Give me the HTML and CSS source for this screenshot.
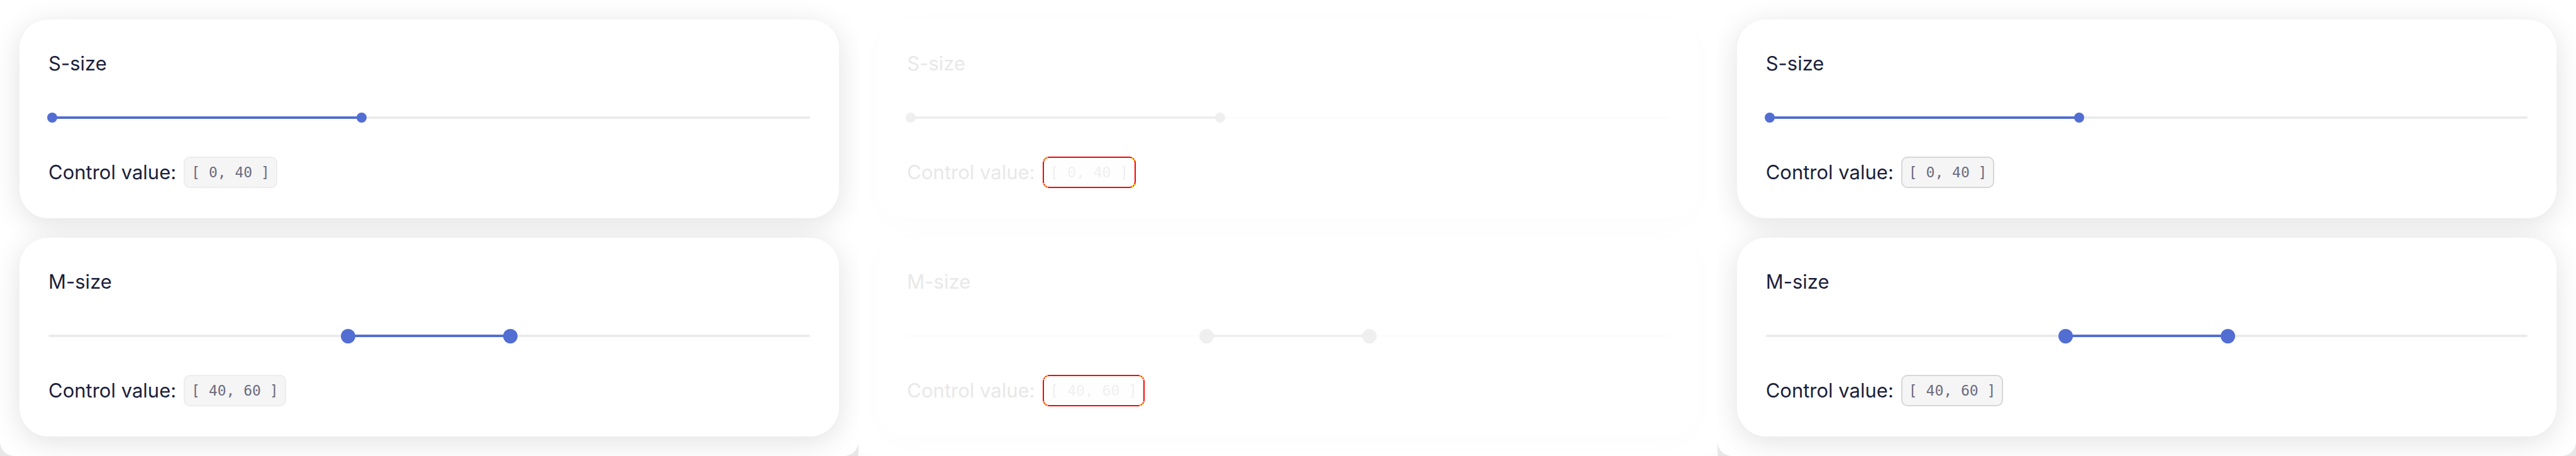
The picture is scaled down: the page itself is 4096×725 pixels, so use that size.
FILE: index.html
```
<!DOCTYPE html>
<html lang="en">
<head>
<meta charset="utf-8">
<title>Range</title>
<link rel="stylesheet" href="styles.css">
</head>
<body>
<main class="board">
  <section class="panel">
    <article class="card">
      <h2 class="title">S-size</h2>
      <div class="slider slider-s">
        <div class="track"><div class="fill" style="width:41.1%"></div></div>
        <input class="range" type="range" aria-label="S-size from" value="0">
        <input class="range" type="range" aria-label="S-size to" value="40">
      </div>
      <p class="value">Control value: <code class="code">[ 0, 40 ]</code></p>
    </article>
    <article class="card">
      <h2 class="title">M-size</h2>
      <div class="slider slider-m">
        <div class="track"><div class="fill" style="margin-left:39.3%;width:21.4%"></div></div>
        <input class="range" type="range" aria-label="M-size from" value="40">
        <input class="range" type="range" aria-label="M-size to" value="60">
      </div>
      <p class="value">Control value: <code class="code">[ 40, 60 ]</code></p>
    </article>
  </section>
  <section class="panel panel-diff">
    <article class="card">
      <h2 class="title">S-size</h2>
      <div class="slider slider-s">
        <div class="track"><div class="fill" style="width:41.1%"></div></div>
        <input class="range" type="range" aria-label="S-size from" value="0">
        <input class="range" type="range" aria-label="S-size to" value="40">
      </div>
      <p class="value">Control value: <code class="code">[ 0, 40 ]</code></p>
    </article>
    <article class="card">
      <h2 class="title">M-size</h2>
      <div class="slider slider-m">
        <div class="track"><div class="fill" style="margin-left:39.3%;width:21.4%"></div></div>
        <input class="range" type="range" aria-label="M-size from" value="40">
        <input class="range" type="range" aria-label="M-size to" value="60">
      </div>
      <p class="value">Control value: <code class="code">[ 40, 60 ]</code></p>
    </article>
  </section>
  <section class="panel panel-new">
    <article class="card">
      <h2 class="title">S-size</h2>
      <div class="slider slider-s">
        <div class="track"><div class="fill" style="width:41.1%"></div></div>
        <input class="range" type="range" aria-label="S-size from" value="0">
        <input class="range" type="range" aria-label="S-size to" value="40">
      </div>
      <p class="value">Control value: <code class="code">[ 0, 40 ]</code></p>
    </article>
    <article class="card">
      <h2 class="title">M-size</h2>
      <div class="slider slider-m">
        <div class="track"><div class="fill" style="margin-left:39.3%;width:21.4%"></div></div>
        <input class="range" type="range" aria-label="M-size from" value="40">
        <input class="range" type="range" aria-label="M-size to" value="60">
      </div>
      <p class="value">Control value: <code class="code">[ 40, 60 ]</code></p>
    </article>
  </section>
</main>
</body>
</html>
```
FILE: styles.css
```
* { box-sizing: border-box; }
body { margin: 0; background: #fff; font-family: Inter, "Liberation Sans", sans-serif; }
.board {
  display: grid;
  grid-template-columns: repeat(3, 1fr);
  background: linear-gradient(90deg, #e8e8e8 33.33%, #fdfdfd 33.33% 66.67%, #e8e8e8 66.67%);
}
.panel {
  --ink: #1b1f3b;
  --accent: #526ed3;
  --rail: #ebebeb;
  --code-ink: #6c6c80;
  --code-bg: #f5f5f5;
  --code-line: #ededed;
  --shade: rgba(0, 0, 0, 0.12);
  display: flex;
  flex-direction: column;
  gap: 31px;
  padding: 31px;
  overflow: hidden;
  background: #fff;
  border-radius: 0 0 23px 23px;
}
.panel-diff {
  --ink: #e8e8e8;
  --accent: #efefef;
  --rail: #fcfcfc;
  --code-ink: #f0f0f0;
  --code-bg: #fefefe;
  --code-line: #f00;
  --shade: rgba(0, 0, 0, 0.015);
}
.panel-new { --code-line: #d7d7d7; }
.card {
  padding: 46px 46px 48px;
  border-radius: 46px;
  background: #fff;
  box-shadow: 0 8px 46px var(--shade);
  color: var(--ink);
}
.title { margin: 0; font-size: 31px; font-weight: 400; line-height: 48px; }
.slider { position: relative; height: 32px; margin: 46px 0; padding: 14px 0; }
.slider-s { --thumb: 16px; --start: -2px; --end: -33px; }
.slider-m { --thumb: 23px; --start: -52px; --end: -52px; }
.track { height: 4px; border-radius: 2px; background: var(--rail); }
.fill { height: 4px; background: var(--accent); }
.range {
  position: absolute;
  top: 0;
  left: var(--start);
  width: calc(100% - var(--start) - var(--end));
  height: 32px;
  margin: 0;
  appearance: none;
  background: none;
  pointer-events: none;
}
.range::-webkit-slider-thumb {
  appearance: none;
  width: var(--thumb);
  height: var(--thumb);
  border-radius: 50%;
  background: var(--accent);
  pointer-events: auto;
}
.value { display: flex; align-items: center; gap: 12px; margin: 0; font-size: 31px; line-height: 46px; }
.code {
  position: relative;
  padding: 0 10px;
  border: 2px solid var(--code-line);
  border-radius: 10px;
  background: var(--code-bg);
  color: var(--code-ink);
  font: 23px/46px "DejaVu Sans Mono", monospace;
}
.panel-diff .code::before {
  content: "";
  position: absolute;
  inset: -2px;
  border: 2px dotted #ff0;
  border-radius: 10px;
  mask:
    linear-gradient(#000, #000) 0 0 / 8px 8px no-repeat,
    linear-gradient(#000, #000) 100% 0 / 8px 8px no-repeat,
    linear-gradient(#000, #000) 0 100% / 8px 8px no-repeat,
    linear-gradient(#000, #000) 100% 100% / 8px 8px no-repeat;
}
```
